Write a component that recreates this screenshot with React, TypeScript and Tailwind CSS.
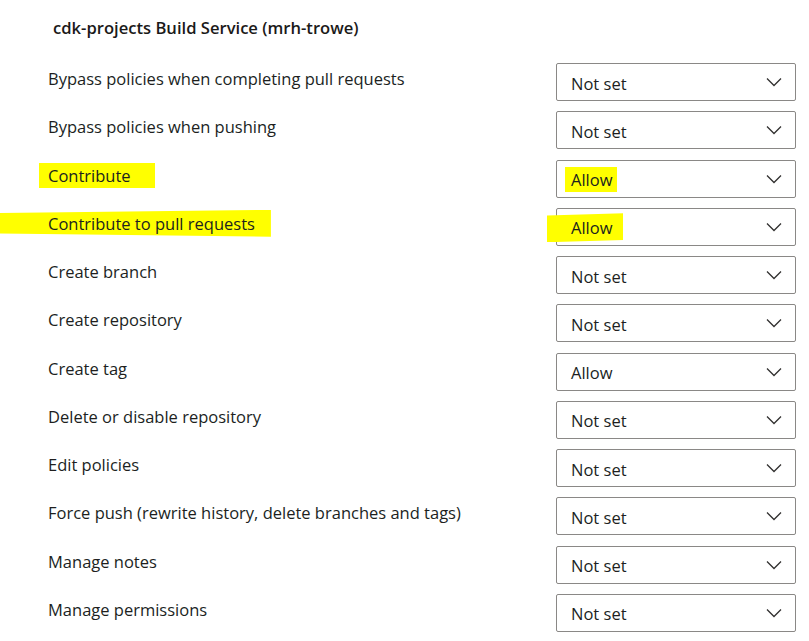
type Row = {
  label: string
  value: string
  labelMark?: "short" | "wide"
  valueMark?: "short" | "wide"
}

const rows: Row[] = [
  { label: "Bypass policies when completing pull requests", value: "Not set" },
  { label: "Bypass policies when pushing", value: "Not set" },
  { label: "Contribute", value: "Allow", labelMark: "short", valueMark: "short" },
  { label: "Contribute to pull requests", value: "Allow", labelMark: "wide", valueMark: "wide" },
  { label: "Create branch", value: "Not set" },
  { label: "Create repository", value: "Not set" },
  { label: "Create tag", value: "Allow" },
  { label: "Delete or disable repository", value: "Not set" },
  { label: "Edit policies", value: "Not set" },
  { label: "Force push (rewrite history, delete branches and tags)", value: "Not set" },
  { label: "Manage notes", value: "Not set" },
  { label: "Manage permissions", value: "Not set" },
]

function Chevron() {
  return (
    <svg width="16" height="10" viewBox="0 0 16 10" fill="none" className="text-[#323130]">
      <path d="M1 1.5 L8 8.5 L15 1.5" stroke="currentColor" strokeWidth="1.3" />
    </svg>
  )
}

function Label({ row }: { row: Row }) {
  if (row.labelMark === "short") {
    return (
      <span className="-ml-[9px] bg-[#ffff00] pl-[9px] pr-[24px] py-[1px]">{row.label}</span>
    )
  }
  if (row.labelMark === "wide") {
    return (
      <span className="-ml-[48px] bg-[#ffff00] pl-[48px] pr-[16px] py-[2px] [clip-path:polygon(0_12%,100%_0,100%_100%,0_88%)]">
        {row.label}
      </span>
    )
  }
  return <span>{row.label}</span>
}

function Value({ row }: { row: Row }) {
  if (row.valueMark === "short") {
    return <span className="-ml-[6px] bg-[#ffff00] pl-[6px] pr-[5px] py-[1px]">{row.value}</span>
  }
  if (row.valueMark === "wide") {
    return (
      <span className="-ml-[24px] bg-[#ffff00] pl-[24px] pr-[11px] py-[3px] [clip-path:polygon(0_8%,100%_0,100%_92%,0_100%)]">
        {row.value}
      </span>
    )
  }
  return <span>{row.value}</span>
}

export default function App() {
  return (
    <div
      className="w-[809px] h-[641px] overflow-hidden bg-white text-[#201f1e]"
      style={{ fontFamily: '"Open Sans", "Noto Sans", sans-serif' }}
    >
      <h2 className="pl-[53px] pt-[17px] text-[16.6px] leading-[22px] font-semibold text-[#1b1a19]">
        cdk-projects Build Service (mrh-trowe)
      </h2>

      <div className="mt-[24px] flex flex-col gap-[10.27px] pl-[48px] pr-[13px]">
        {rows.map((row) => (
          <div key={row.label} className="flex items-center justify-between h-[38px]">
            <div className="mb-[6px] text-[16.5px] leading-[22px]">
              <Label row={row} />
            </div>
            <div className="flex items-center justify-between w-[240px] h-[38px] pl-[14px] pr-[13px] border border-[#8a8886] rounded-[2px] text-[16.5px] leading-[22px]">
              <div className="mt-[3px]">
                <Value row={row} />
              </div>
              <Chevron />
            </div>
          </div>
        ))}
      </div>
    </div>
  )
}
